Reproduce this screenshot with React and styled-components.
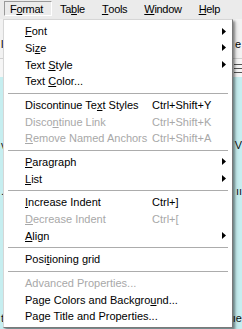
import React from "react";
import styled, { createGlobalStyle } from "styled-components";

const Global = createGlobalStyle`
  html, body { margin: 0; padding: 0; }
  body {
    font-family: "Liberation Sans", Arial, sans-serif;
    font-size: 11px;
    background: #c6eef0;
    overflow: hidden;
  }
`;

const Page = styled.div`
  position: relative;
  width: 242px;
  height: 329px;
  display: flex;
  flex-direction: column;
  background: #c6eef0;
  overflow: hidden;
`;

const MenuBar = styled.div`
  height: 19px;
  display: flex;
  align-items: flex-start;
  gap: 2px;
  padding-left: 4px;
  background: #ebebeb;
  box-sizing: border-box;
  letter-spacing: -0.3px;
`;

const BarItem = styled.div`
  margin-top: 1px;
  height: 15px;
  display: flex;
  align-items: center;
  padding: 0 8px 0 5px;
  box-sizing: border-box;
  color: #000;
  border: 1px solid transparent;
  ${(p) => p.$open && `border-color: #9a9a9a #ffffff #ffffff #9a9a9a;`}
`;

const ToolBand = styled.div`
  height: 40px;
  background: #f2f2f2;
  display: flex;
  align-items: flex-end;
  justify-content: space-between;
  padding: 0 1px 8px 1px;
  box-sizing: border-box;
  border-bottom: 1px solid #d0d0d0;
`;

const Ruler = styled.div`
  height: 18px;
  background: #f6f6f6;
  display: flex;
  flex-direction: column;
  justify-content: center;
  gap: 3px;
  padding-left: 234px;
  box-sizing: border-box;
`;

const RulerLine = styled.div`
  height: 1px;
  background: #555;
`;

const Doc = styled.div`
  flex: 1;
  display: flex;
  flex-direction: column;
  padding: 62px 0 5px 0;
  gap: 34px;
  box-sizing: border-box;
`;

const DocLine = styled.div`
  display: flex;
  justify-content: space-between;
  padding: 0 0 0 1px;
  color: #111;
  font-size: 11px;
  line-height: 12px;
  ${(p) => p.$bottom && `margin-top: auto;`}
`;

const Menu = styled.div`
  position: absolute;
  left: 3px;
  top: 19px;
  width: 230px;
  box-sizing: border-box;
  background: #ffffff;
  border: 1px solid;
  border-color: #d6d6d6 #7a7a7a #7a7a7a #d6d6d6;
  padding: 3px 0 2px 0;
  box-shadow: 2px 2px 2px rgba(0, 0, 0, 0.35), 3px 3px 4px rgba(0, 0, 0, 0.15);
`;

const Row = styled.div`
  height: 16.67px;
  display: grid;
  grid-template-columns: 127px 1fr 15px;
  align-items: center;
  padding-left: 21px;
  color: ${(p) => (p.$disabled ? "#a8a8a8" : "#000")};
  white-space: nowrap;
`;

const Shortcut = styled.span``;

const Arrow = styled.svg`
  width: 4px;
  height: 7px;
  margin-left: 5px;
  display: block;
`;

const Separator = styled.div`
  height: 7px;
  display: flex;
  align-items: center;
  padding: 0 4px;
  &::after {
    content: "";
    flex: 1;
    height: 1px;
    background: #acacac;
  }
`;

const Mn = styled.span`
  text-decoration: underline;
  text-underline-offset: 1px;
  text-decoration-thickness: 1px;
`;

function Label({ text }) {
  const i = text.indexOf("&");
  if (i < 0) return <>{text}</>;
  return (
    <>
      {text.slice(0, i)}
      <Mn>{text[i + 1]}</Mn>
      {text.slice(i + 2)}
    </>
  );
}

const groups = [
  [
    { t: "&Font", sub: true },
    { t: "Si&ze", sub: true },
    { t: "Text &Style", sub: true },
    { t: "Text &Color..." },
  ],
  [
    { t: "Discontinue Te&xt Styles", k: "Ctrl+Shift+Y" },
    { t: "Disco&ntinue Link", k: "Ctrl+Shift+K", d: true },
    { t: "&Remove Named Anchors", k: "Ctrl+Shift+A", d: true },
  ],
  [
    { t: "&Paragraph", sub: true },
    { t: "&List", sub: true },
  ],
  [
    { t: "&Increase Indent", k: "Ctrl+]" },
    { t: "&Decrease Indent", k: "Ctrl+[", d: true },
    { t: "&Align", sub: true },
  ],
  [{ t: "Posi&tioning grid" }],
  [
    { t: "Advanced Properties...", d: true },
    { t: "Page Colors and Backgro&und..." },
    { t: "Page Title and Properties..." },
  ],
];

const bar = [
  { t: "F&ormat", open: true },
  { t: "Ta&ble" },
  { t: "&Tools" },
  { t: "&Window" },
  { t: "&Help" },
];

export default function App() {
  return (
    <>
      <Global />
      <Page>
        <MenuBar>
          {bar.map((b) => (
            <BarItem key={b.t} $open={b.open}>
              <Label text={b.t} />
            </BarItem>
          ))}
        </MenuBar>
        <ToolBand>
          <span>l</span>
          <span>e</span>
        </ToolBand>
        <Ruler>
          <RulerLine />
          <RulerLine />
          <RulerLine />
        </Ruler>
        <Doc>
          <DocLine>
            <span>v</span>
            <span>V</span>
          </DocLine>
          <DocLine>
            <span>.</span>
            <span>ıı</span>
          </DocLine>
          <DocLine $bottom>
            <span>t</span>
            <span>ıe</span>
          </DocLine>
        </Doc>
        <Menu>
          {groups.map((g, gi) => (
            <React.Fragment key={gi}>
              {gi > 0 && <Separator />}
              {g.map((it) => (
                <Row key={it.t} $disabled={it.d}>
                  <span>
                    <Label text={it.t} />
                  </span>
                  <Shortcut>{it.k || ""}</Shortcut>
                  {it.sub ? (
                    <Arrow viewBox="0 0 4 7">
                      <polygon points="0,0 4,3.5 0,7" fill="#000" />
                    </Arrow>
                  ) : (
                    <span />
                  )}
                </Row>
              ))}
            </React.Fragment>
          ))}
        </Menu>
      </Page>
    </>
  );
}
